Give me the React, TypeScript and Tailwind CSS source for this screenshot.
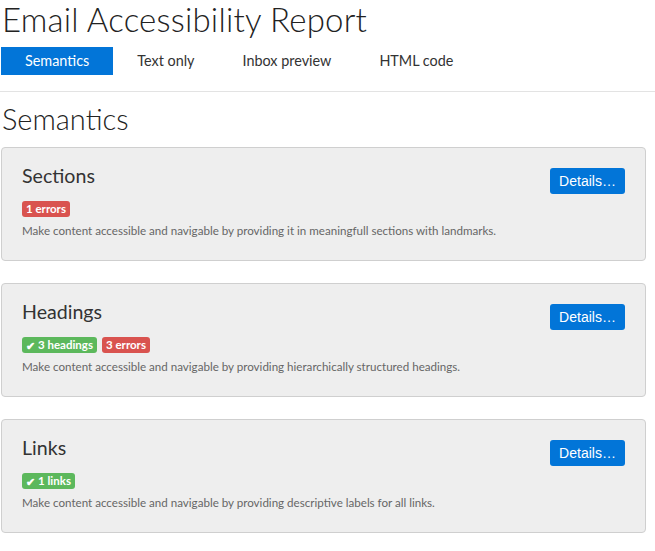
import React from "react";

type Badge = { kind: "ok" | "error"; label: string };

const sections: { title: string; badges: Badge[]; text: string }[] = [
  {
    title: "Sections",
    badges: [{ kind: "error", label: "1 errors" }],
    text: "Make content accessible and navigable by providing it in meaningfull sections with landmarks.",
  },
  {
    title: "Headings",
    badges: [
      { kind: "ok", label: "3 headings" },
      { kind: "error", label: "3 errors" },
    ],
    text: "Make content accessible and navigable by providing hierarchically structured headings.",
  },
  {
    title: "Links",
    badges: [{ kind: "ok", label: "1 links" }],
    text: "Make content accessible and navigable by providing descriptive labels for all links.",
  },
];

const tabs = ["Semantics", "Text only", "Inbox preview", "HTML code"];

const App = () => {
  return (
    <div className="w-[655px] bg-white font-['Lato','Open_Sans',sans-serif] text-[#222]">
      <h1 className="pl-[2px] text-[33px] font-light leading-[38px] tracking-[0.2px]">
        Email Accessibility Report
      </h1>

      <div className="mt-[9px] flex h-[28px] pl-[1px] text-[14.4px]">
        {tabs.map((tab, i) => (
          <div
            key={tab}
            className={
              i === 0
                ? "flex items-center bg-[#0275d8] px-[24px] text-white"
                : "flex items-center px-[24px] text-[#333]"
            }
          >
            {tab}
          </div>
        ))}
      </div>

      <div className="mt-[16px] border-t border-[#e3e3e3]" />

      <h2 className="mt-[10px] pl-[2px] text-[29px] font-light leading-[34px]">Semantics</h2>

      <div className="mt-[11px] flex flex-col gap-[22px] pl-[1px]">
        {sections.map((s) => (
          <div
            key={s.title}
            className="flex w-[645px] items-start justify-between rounded-[4px] border border-[#cfcfcf] bg-[#eeeeee] pt-[16px] pr-[20px] pb-[22px] pl-[20px]"
          >
            <div className="flex flex-col">
              <h3 className="text-[19.6px] font-normal leading-[24px] text-[#333]">{s.title}</h3>
              <div className="mt-[13px] flex gap-[5px]">
                {s.badges.map((b) => (
                  <span
                    key={b.label}
                    className={
                      b.kind === "ok"
                        ? "flex h-[16px] items-center rounded-[3px] bg-[#5cb85c] px-[4px] text-[11.5px] font-bold leading-none text-white"
                        : "flex h-[16px] items-center rounded-[3px] bg-[#d9534f] px-[4px] text-[11.5px] font-bold leading-none text-white"
                    }
                  >
                    {b.kind === "ok" && <span className="mr-[3px] text-[11px]">✔</span>}
                    {b.label}
                  </span>
                ))}
              </div>
              <p className="mt-[7px] text-[11.6px] leading-[14px] text-[#666]">{s.text}</p>
            </div>
            <button className="mt-[4px] h-[26px] w-[75px] rounded-[3px] bg-[#0275d8] font-['Liberation_Sans',Arial,sans-serif] text-[14px] text-white">
              Details…
            </button>
          </div>
        ))}
      </div>
    </div>
  );
};

export default App;
